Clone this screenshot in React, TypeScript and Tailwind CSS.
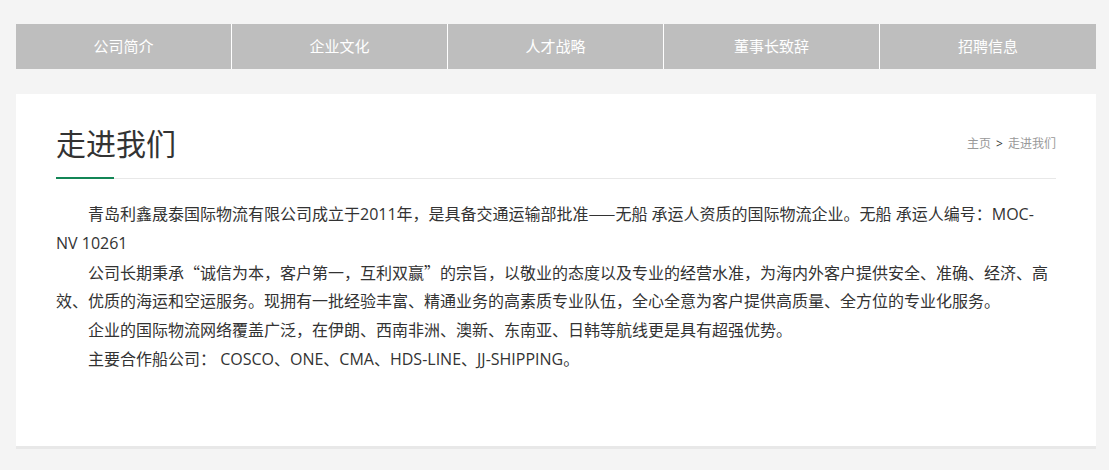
import React from "react";

const tabs = ["公司简介", "企业文化", "人才战略", "董事长致辞", "招聘信息"];

const cjk = { fontFamily: '"Noto Sans CJK SC", sans-serif' };

export default function App() {
  return (
    <div
      className="min-h-[470px] w-full bg-[#f4f4f4] pt-[24px]"
      style={{ fontFamily: '"Open Sans", "Noto Sans CJK SC", sans-serif' }}
    >
      <div className="ml-[16px] flex h-[45px] w-[1080px] bg-[#bebebe]">
        {tabs.map((t, i) => (
          <div
            key={t}
            className={
              "flex h-full w-[216px] items-center justify-center text-[15px] text-white " +
              (i < tabs.length - 1 ? "border-r border-white" : "")
            }
          >
            {t}
          </div>
        ))}
      </div>

      <div className="ml-[16px] mt-[25px] h-[355px] w-[1080px] border-b-[3px] border-[#e8e8e8] bg-white px-[40px] pt-[26px]">
        <div className="relative flex h-[59px] items-start justify-between border-b border-[#e8e8e8]">
          <div className="flex h-[48px] items-center text-[30px] leading-none text-[#333]">走进我们</div>
          <div className="flex h-[48px] items-center text-[12px] text-[#999]">
            <span>主页</span>
            <span className="mx-[5px] text-[#333]">&gt;</span>
            <span>走进我们</span>
          </div>
          <div className="absolute bottom-[-1px] left-0 h-[2px] w-[58px] bg-[#138656]" />
        </div>

        <div className="mt-[20px] whitespace-nowrap text-[16px] leading-[1.8] text-[#333]">
          <p className="indent-[32px]">
            青岛利鑫晟泰国际物流有限公司成立于2011年，是具备交通运输部批准<span style={cjk}>——</span>无船 承运人资质的国际物流企业。无船 承运人编号：MOC-
            <br />
            NV 10261
          </p>
          <p className="indent-[32px]">
            公司长期秉承<span style={cjk}>“</span>诚信为本，客户第一，互利双赢<span style={cjk}>”</span>的宗旨，以敬业的态度以及专业的经营水准，为海内外客户提供安全、准确、经济、高
            <br />
            效、优质的海运和空运服务。现拥有一批经验丰富、精通业务的高素质专业队伍，全心全意为客户提供高质量、全方位的专业化服务。
          </p>
          <p className="indent-[32px]">企业的国际物流网络覆盖广泛，在伊朗、西南非洲、澳新、东南亚、日韩等航线更是具有超强优势。</p>
          <p className="indent-[32px]">主要合作船公司： COSCO、ONE、CMA、HDS-LINE、JJ-SHIPPING。</p>
        </div>
      </div>
    </div>
  );
}
